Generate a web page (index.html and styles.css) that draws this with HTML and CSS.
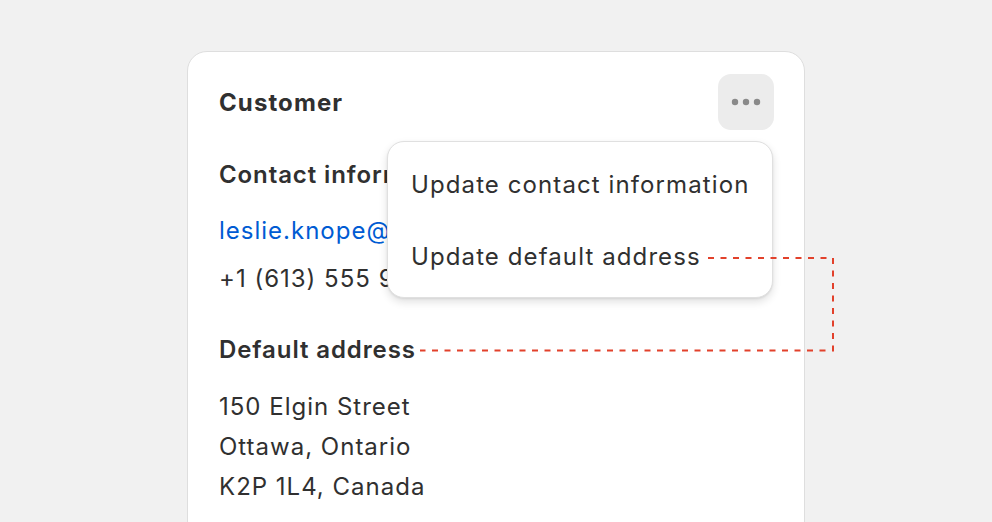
FILE: index.html
```html
<!DOCTYPE html>
<html>
<head>
<meta charset="utf-8">
<link rel="stylesheet" href="styles.css">
</head>
<body>
<div class="stage">
  <div class="card">
    <div class="card-header">
      <h2 class="title">Customer</h2>
      <button class="more-btn" aria-label="More actions">
        <svg width="30" height="8" viewBox="0 0 30 8"><circle cx="4" cy="4" r="3.2" fill="#8a8a8a"/><circle cx="15" cy="4" r="3.2" fill="#8a8a8a"/><circle cx="26" cy="4" r="3.2" fill="#8a8a8a"/></svg>
      </button>
    </div>
    <section class="section contact">
      <h3 class="subtitle">Contact information</h3>
      <a class="email" href="#">leslie.knope@pawnee.gov</a>
      <p class="line phone">+1 (613) 555 9876</p>
    </section>
    <section class="section address">
      <h3 class="subtitle">Default address</h3>
      <p class="line addr">150 Elgin Street</p>
      <p class="line addr">Ottawa, Ontario</p>
      <p class="line addr">K2P 1L4, Canada</p>
    </section>
    <div class="menu">
      <div class="menu-item">Update contact information</div>
      <div class="menu-item">Update default address</div>
    </div>
  </div>
  <svg class="connector" width="992" height="522" viewBox="0 0 992 522">
    <path d="M708 258 H833 V350.5 H420" fill="none" stroke="#e2412b" stroke-width="2" stroke-dasharray="6 6.5"/>
  </svg>
</div>
</body>
</html>
```
FILE: styles.css
```css
* { box-sizing: border-box; }
html, body { margin: 0; padding: 0; }
body {
  background: #f1f1f1;
  font-family: Inter, "Noto Sans", sans-serif;
  letter-spacing: 1px;
  color: #303030;
  width: 992px;
  height: 522px;
  overflow: hidden;
}
.stage {
  position: relative;
  width: 992px;
  height: 522px;
  overflow: hidden;
  padding-top: 51px;
  display: flex;
  justify-content: center;
}
.card {
  position: relative;
  flex: none;
  width: 618px;
  height: 490px;
  background: #fff;
  border: 1px solid #dedede;
  border-radius: 20px;
  padding: 22px 30px 0 31px;
}
.card-header {
  display: flex;
  justify-content: space-between;
  align-items: center;
  height: 56px;
}
.title {
  margin: 0;
  font-size: 24px;
  font-weight: 650;
  letter-spacing: 1.1px;
}
.more-btn {
  width: 56px;
  height: 56px;
  border: none;
  border-radius: 13px;
  background: #ececec;
  display: flex;
  align-items: center;
  justify-content: center;
  padding: 0;
}
.section { display: flex; flex-direction: column; }
.contact { margin-top: 25px; }
.subtitle {
  margin: 0;
  font-size: 24px;
  font-weight: 600;
  line-height: 40px;
  letter-spacing: 0.9px;
}
.email {
  margin-top: 16px;
  font-size: 24px;
  line-height: 40px;
  color: #005bd3;
  text-decoration: none;
  white-space: nowrap;
}
.line {
  margin: 0;
  font-size: 24px;
  line-height: 40px;
  white-space: nowrap;
}
.phone { margin-top: 8px; }
.address { margin-top: 31px; }
.address .subtitle { margin-bottom: 17px; }
.menu {
  position: absolute;
  left: 199px;
  top: 89px;
  width: 386px;
  height: 157px;
  background: #fff;
  border: 1px solid #e0e0e0;
  border-radius: 17px;
  box-shadow: 0 4px 8px rgba(0,0,0,0.12), 0 1px 2px rgba(0,0,0,0.08);
  padding: 6px 0 0 23px;
  display: flex;
  flex-direction: column;
}
.menu-item {
  height: 72px;
  display: flex;
  align-items: center;
  font-size: 24px;
  letter-spacing: 1.1px;
  white-space: nowrap;
}
.connector {
  position: absolute;
  left: 0;
  top: 0;
  pointer-events: none;
}
```
